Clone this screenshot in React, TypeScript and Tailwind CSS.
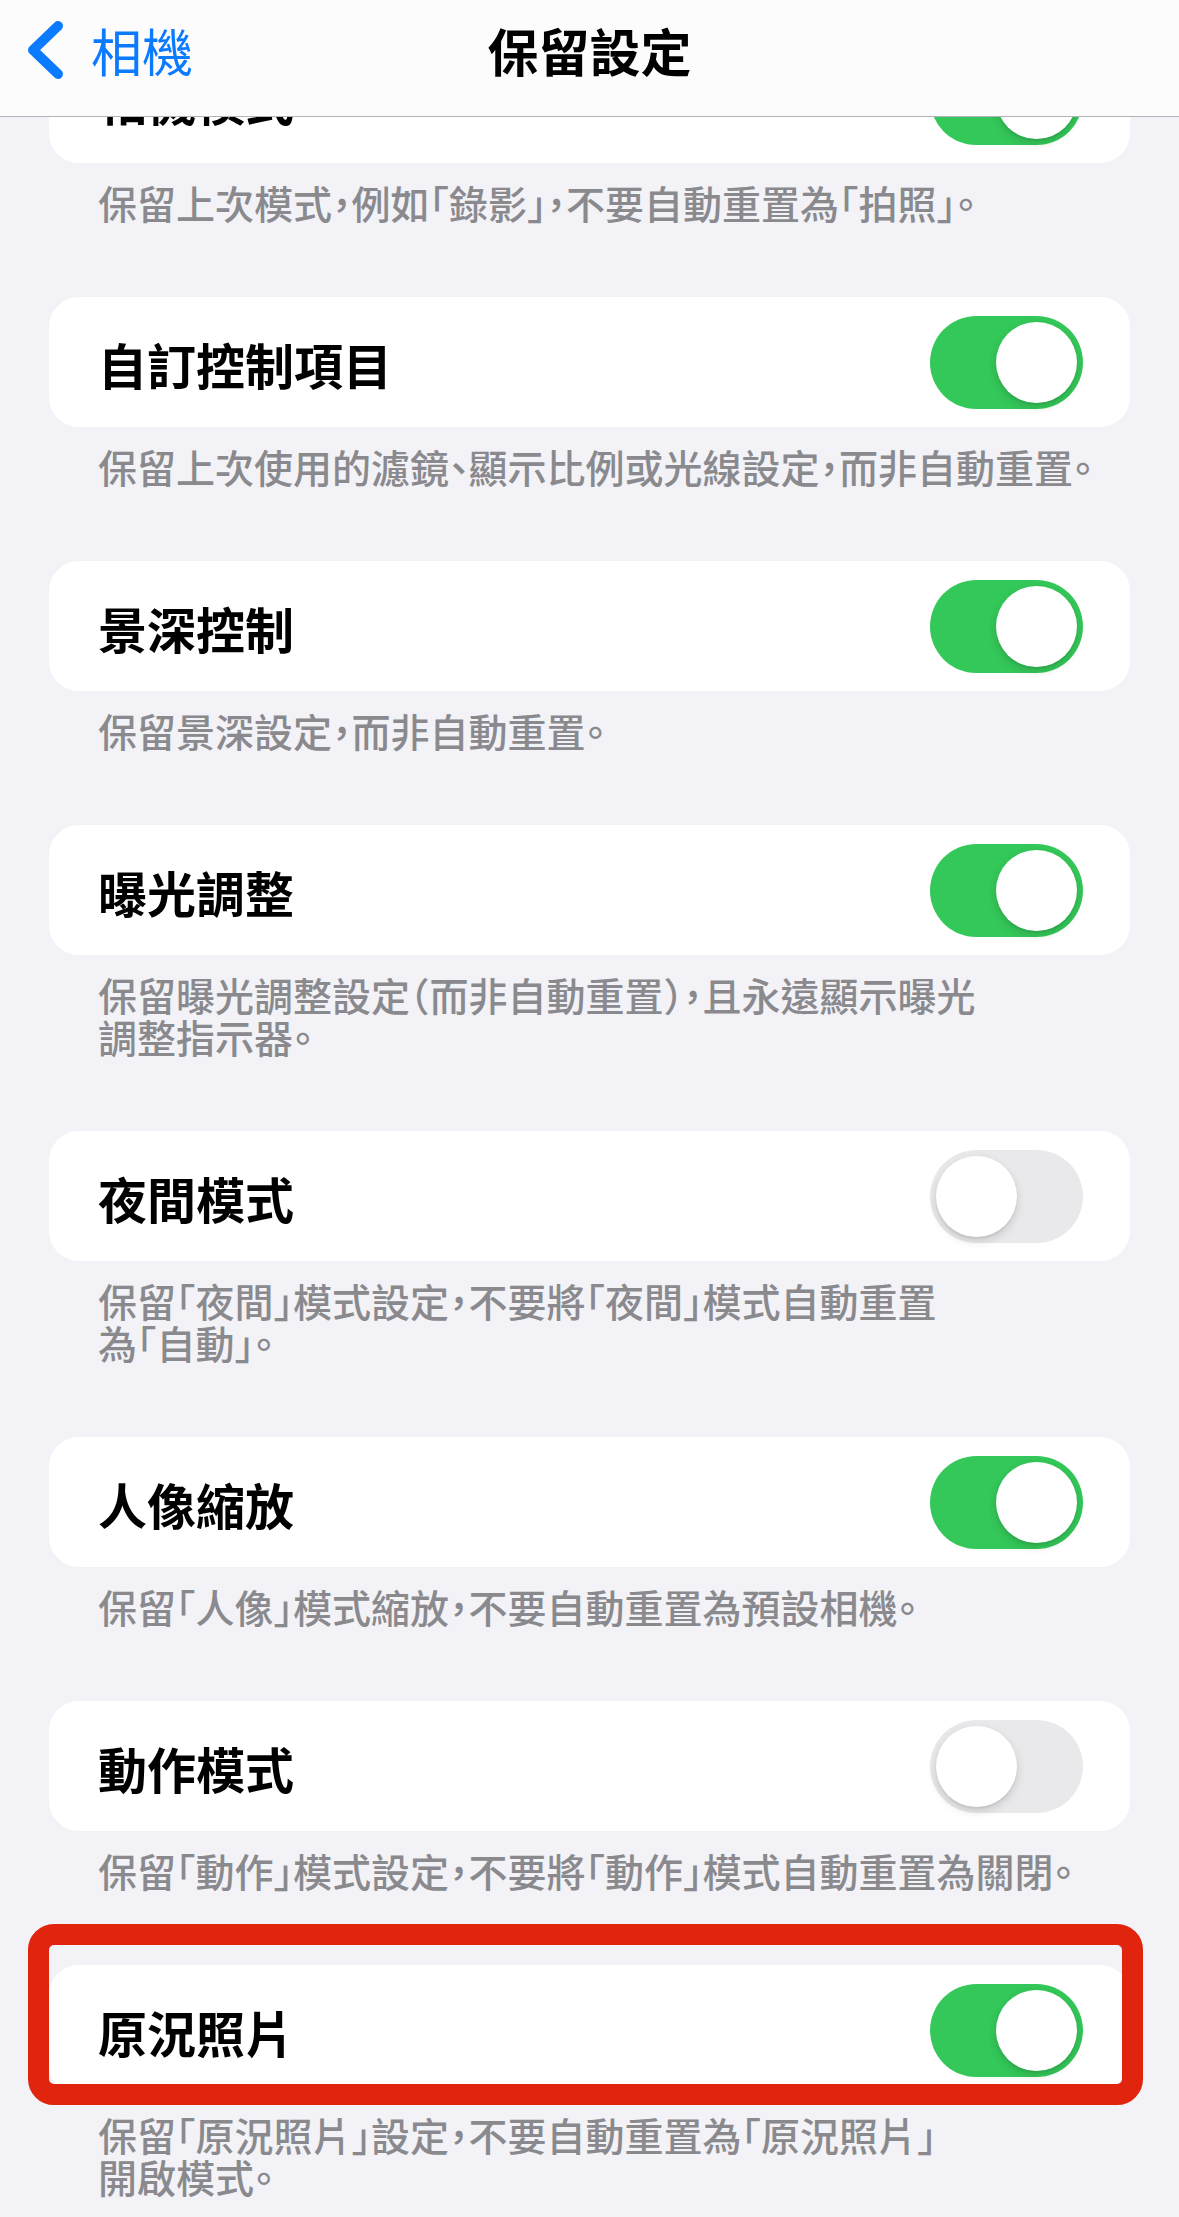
import { ReactNode } from "react";

interface Row {
  title: string;
  on: boolean;
  desc: string[];
  highlight?: boolean;
}

const rows: Row[] = [
  { title: "相機模式", on: true, desc: ["保留上次模式，例如「錄影」，不要自動重置為「拍照」。"] },
  { title: "自訂控制項目", on: true, desc: ["保留上次使用的濾鏡、顯示比例或光線設定，而非自動重置。"] },
  { title: "景深控制", on: true, desc: ["保留景深設定，而非自動重置。"] },
  {
    title: "曝光調整",
    on: true,
    desc: ["保留曝光調整設定（而非自動重置），且永遠顯示曝光", "調整指示器。"],
  },
  {
    title: "夜間模式",
    on: false,
    desc: ["保留「夜間」模式設定，不要將「夜間」模式自動重置", "為「自動」。"],
  },
  { title: "人像縮放", on: true, desc: ["保留「人像」模式縮放，不要自動重置為預設相機。"] },
  { title: "動作模式", on: false, desc: ["保留「動作」模式設定，不要將「動作」模式自動重置為關閉。"] },
  {
    title: "原況照片",
    on: true,
    desc: ["保留「原況照片」設定，不要自動重置為「原況照片」", "開啟模式。"],
    highlight: true,
  },
];

function Toggle({ on }: { on: boolean }) {
  return (
    <div
      className={
        on
          ? "w-[153px] h-[93px] shrink-0 rounded-full bg-[#34c759] p-[6px] flex justify-end"
          : "w-[153px] h-[93px] shrink-0 rounded-full bg-[#e9e9eb] p-[6px] flex justify-start"
      }
    >
      <div className="w-[81px] h-[81px] rounded-full bg-white shadow-[0_4px_10px_rgba(0,0,0,0.14),0_2px_2px_rgba(0,0,0,0.06)]" />
    </div>
  );
}

function Card({ children, highlight }: { children: ReactNode; highlight?: boolean }) {
  return (
    <div className="relative mx-[49px]">
      <div className="h-[130px] rounded-[30px] bg-white pl-[49px] pr-[47px] flex items-center justify-between">
        {children}
      </div>
      {/* red annotation frame */}
      {highlight && (
        <div className="absolute -left-[21px] -right-[13px] -top-[41px] -bottom-[10px] rounded-[26px] border-[21px] border-[#e1240e] pointer-events-none" />
      )}
    </div>
  );
}

export default function App() {
  return (
    <div className="w-[1179px] h-[2217px] overflow-hidden bg-[#f2f2f7] font-['Noto_Sans_CJK_TC','Noto_Sans_CJK_SC',sans-serif] flex flex-col">
      {/* nav bar */}
      <div className="h-[117px] shrink-0 bg-[#fcfcfd] border-b border-[#b4b4b8] relative z-10">
        <div className="h-[100px] grid grid-cols-3 items-center">
          <div className="flex items-center">
            <svg className="ml-[25px]" width="40" height="58" viewBox="0 0 40 58" fill="none">
              <path
                d="M33 5 L8 29 L33 53"
                stroke="#0a7aff"
                strokeWidth="10"
                strokeLinecap="round"
                strokeLinejoin="round"
              />
            </svg>
            <span className="ml-[26px] text-[51px] leading-none text-[#0a7aff] whitespace-nowrap">相機</span>
          </div>
          <div className="text-center text-[51px] leading-none font-bold text-black whitespace-nowrap">
            保留設定
          </div>
          <div />
        </div>
      </div>

      {/* scrolled list */}
      <div className="flex-1 overflow-hidden">
        <div className="-mt-[84px]">
          {rows.map((row) => (
            <div key={row.title}>
              <Card highlight={row.highlight}>
                <span className="text-[49px] leading-none font-bold text-black pt-[2px] whitespace-nowrap">
                  {row.title}
                </span>
                <Toggle on={row.on} />
              </Card>
              <div className="pl-[98px] pt-[18px] pb-[74px] text-[39px] leading-[42px] font-medium text-[#8a8a8e] [font-feature-settings:'halt']">
                {row.desc.map((line) => (
                  <div key={line} className="whitespace-nowrap">
                    {line}
                  </div>
                ))}
              </div>
            </div>
          ))}
        </div>
      </div>
    </div>
  );
}
